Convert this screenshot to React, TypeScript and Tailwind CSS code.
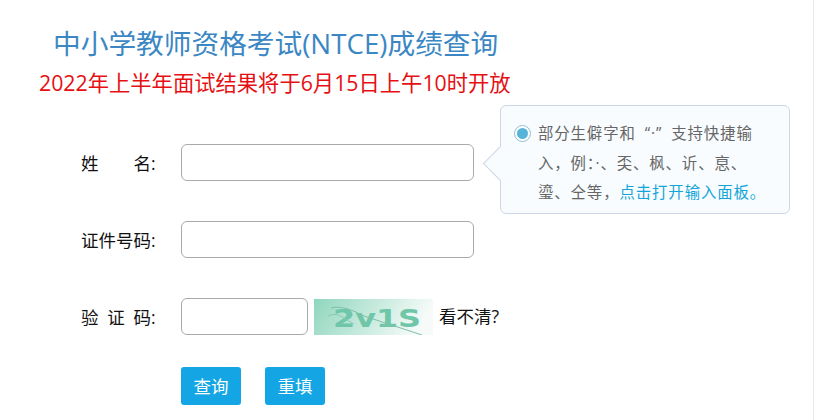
const FONT = "font-['Open_Sans','Noto_Sans_CJK_SC',sans-serif]";

const FormLabel = ({ chars }: { chars: string[] }) => (
  <label className="flex w-[77px] text-[17.5px] leading-6 text-[#111]">
    <span className="flex flex-1 justify-between">
      {chars.map((c) => (
        <span key={c}>{c}</span>
      ))}
    </span>
    <span className="w-[7px]">:</span>
  </label>
);

const Captcha = () => (
  <svg width="119" height="36" viewBox="0 0 119 36" className="block">
    <defs>
      <linearGradient id="captchaBg" x1="0" y1="0" x2="1" y2="0.2">
        <stop offset="0" stopColor="#8fd6bd" />
        <stop offset="1" stopColor="#f6fbf9" />
      </linearGradient>
    </defs>
    <rect width="119" height="36" fill="url(#captchaBg)" />
    <text
      x="19"
      y="28"
      fontFamily="'DejaVu Sans', sans-serif"
      fontSize="24"
      fontWeight="700"
      fill="#6fc6a8"
      textLength="88"
      lengthAdjust="spacingAndGlyphs"
    >
      2v1S
    </text>
    <path d="M17 9 C28 6 40 12 50 17 L108 36" fill="none" stroke="#7fbfa8" strokeWidth="1" />
    <path d="M14 17 C24 12 30 20 40 25" fill="none" stroke="#8ccbb4" strokeWidth="1" />
  </svg>
);

export default function App() {
  return (
    <div className={`relative h-[420px] w-[814px] overflow-hidden border-r border-[#e8e8e8] bg-white ${FONT}`}>
      {/* Header */}
      <h1 className="pl-[53px] pt-[24px] text-[27.7px] font-normal leading-[38px] text-[#3b87c4]">
        中小学教师资格考试(NTCE)成绩查询
      </h1>
      <p className="pl-[39px] pt-[1px] text-[21.3px] leading-[40px] text-[#e60f12]">
        2022年上半年面试结果将于6月15日上午10时开放
      </p>

      {/* Form */}
      <div className="mt-[41px] flex flex-col gap-10 pl-[81px]">
        <div className="flex items-center gap-[23px]">
          <FormLabel chars={["姓", "名"]} />
          <input className="h-[37px] w-[293px] rounded-md border border-[#aaa] bg-white" />
        </div>
        <div className="flex items-center gap-[23px]">
          <FormLabel chars={["证", "件", "号", "码"]} />
          <input className="h-[37px] w-[293px] rounded-md border border-[#aaa] bg-white" />
        </div>
        <div className="flex items-center gap-[23px]">
          <FormLabel chars={["验", "证", "码"]} />
          <div className="flex items-center">
            <input className="h-[37px] w-[127px] rounded-md border border-[#aaa] bg-white" />
            <div className="ml-[6px]">
              <Captcha />
            </div>
            <span className="ml-[6px] text-[17.5px] text-[#111]">看不清?</span>
          </div>
        </div>
        <div className="-mt-2 flex gap-6 pl-[100px]">
          <button className="h-[38px] w-[60px] rounded-[3px] bg-[#13a5e4] text-[17.5px] text-white">查询</button>
          <button className="h-[38px] w-[60px] rounded-[3px] bg-[#13a5e4] text-[17.5px] text-white">重填</button>
        </div>
      </div>

      {/* Tooltip */}
      <div className="absolute left-[500px] top-[105px] h-[109px] w-[290px] rounded-md border border-[#cdd6e6] bg-[#f8fcff] pl-[37px] pt-[13px] text-[15.4px] leading-[29.5px] tracking-[0.9px] text-[#666]">
        <span className="absolute left-[-13px] top-[45px] h-[25px] w-[25px] rotate-45 border-b border-l border-[#cdd6e6] bg-[#f8fcff]" />
        <span className="absolute left-[13px] top-[19px] flex h-[17px] w-[17px] items-center justify-center rounded-full border border-[#8fbfd6] bg-white">
          <span className="h-[11px] w-[11px] rounded-full bg-[#55b4d8]" />
        </span>
        <div className="relative flex whitespace-nowrap">
          <span>部分生僻字和</span>
          <span className="px-[9px]">“·”</span>
          <span>支持快捷输</span>
        </div>
        <div className="relative whitespace-nowrap">入，例：·、奀、枫、䜣、恴、</div>
        <div className="relative flex whitespace-nowrap">
          <span>瑬、仝等，</span>
          <span className="text-[#13a5d8]">点击打开输入面板。</span>
        </div>
      </div>
    </div>
  );
}
